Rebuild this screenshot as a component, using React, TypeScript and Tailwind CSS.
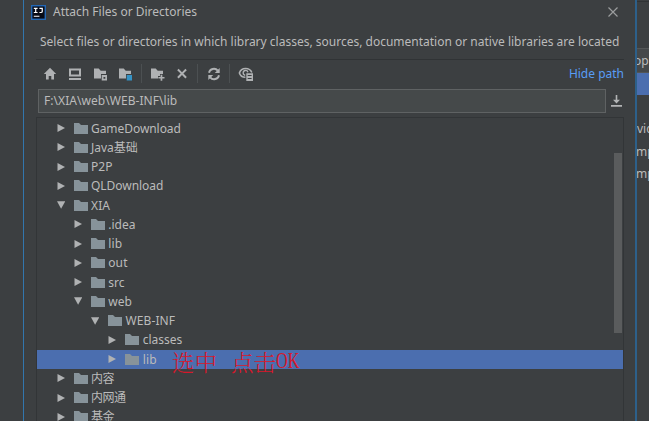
import type { ReactNode } from "react";

type Node = { name: string; depth: number; open?: boolean; selected?: boolean; spacing?: string };

const nodes: Node[] = [
  { name: "GameDownload", depth: 0, spacing: "tracking-[-0.06px]" },
  { name: "Java基础", depth: 0, spacing: "tracking-normal" },
  { name: "P2P", depth: 0 },
  { name: "QLDownload", depth: 0, spacing: "tracking-[-0.04px]" },
  { name: "XIA", depth: 0, open: true },
  { name: ".idea", depth: 1, spacing: "tracking-normal" },
  { name: "lib", depth: 1 },
  { name: "out", depth: 1 },
  { name: "src", depth: 1, spacing: "tracking-normal" },
  { name: "web", depth: 1, open: true, spacing: "tracking-normal" },
  { name: "WEB-INF", depth: 2, open: true, spacing: "tracking-[0.1px]" },
  { name: "classes", depth: 3, spacing: "tracking-normal" },
  { name: "lib", depth: 3, selected: true },
  { name: "内容", depth: 0, spacing: "tracking-[-0.5px]" },
  { name: "内网通", depth: 0, spacing: "tracking-[-0.5px]" },
  { name: "基金", depth: 0, spacing: "tracking-[-0.5px]" },
];

const indents = ["pl-[19.5px]", "pl-[36.75px]", "pl-[54px]", "pl-[71.25px]"];

function TreeRow({ node }: { node: Node }) {
  return (
    <div
      className={`flex h-[19.25px] shrink-0 items-center ${indents[node.depth]} ${node.selected ? "bg-[#4b6eaf]" : ""}`}
    >
      <svg className="mr-[9px] h-2 w-2 shrink-0" viewBox="0 0 8 8" fill="#b0b2b3">
        <path d={node.open ? "M0 .3h8.3L4.1 7.7z" : "M.5 0v8L8 4z"} />
      </svg>
      <svg className="mr-[3.5px] h-[11px] w-[14px] shrink-0" viewBox="0 0 14 11" fill="#87939a">
        <path d="M0 0h5l2 2h7v9H0z" />
      </svg>
      <span className={`whitespace-nowrap leading-[19px] ${node.spacing ?? "tracking-[0.1px]"}`}>{node.name}</span>
    </div>
  );
}

function Icon({ children, className = "" }: { children: ReactNode; className?: string }) {
  return (
    <svg className={`h-4 w-4 shrink-0 ${className}`} viewBox="0 0 16 16" fill="#afb1b3">
      {children}
    </svg>
  );
}

function Toolbar() {
  return (
    <div className="flex h-[29px] items-center pb-[2px] pl-[6px]">
      <Icon>
        <path d="M8 1.8 14.2 8H12v5.5H9.3V10H6.7v3.5H4V8H1.8z" />
      </Icon>
      <Icon className="ml-[9px]">
        <path fillRule="evenodd" d="M2 2.5h12v8H2zM4 4.5v4h8v-4zM2 12h12v2H2z" />
      </Icon>
      <Icon className="ml-[9px]">
        <path d="M2 2.5h4.7l2 2.2H14V8H9v4.5H2z" />
        <path fillRule="evenodd" d="M9.7 9h5.3v5.5H9.7zM11.5 11v1.8h1.8V11z" />
      </Icon>
      <Icon className="ml-[9px]">
        <path d="M2 2.5h4.7l2 2.2H14V8H9v4.5H2z" />
        <path fill="#3592c4" d="M9.7 9h5.3v5.5H9.7z" />
      </Icon>
      <div className="ml-[8px] h-[19px] w-px bg-[#4c5052]" />
      <Icon className="ml-[7px]">
        <path d="M2 2.5h4.7l2 2.2H14V8h-3v2H9v2.5H2z" />
        <path d="M11.6 8.7h1.7v2.2h2.2v1.7h-2.2v2.2h-1.7v-2.2H9.4v-1.7h2.2z" />
      </Icon>
      <Icon className="ml-[9px]">
        <path d="m3.2 4.2 1.4-1.4L8 6.2l3.4-3.4 1.4 1.4L9.4 7.6l3.4 3.5-1.4 1.4L8 9.1l-3.4 3.4-1.4-1.4 3.4-3.5z" />
      </Icon>
      <div className="ml-[7px] h-[19px] w-px bg-[#4c5052]" />
      <Icon className="ml-[8px]">
        <path
          d="M3 6.8a5 5 0 0 1 8.8-2.1M13 9.2a5 5 0 0 1-8.8 2.1"
          fill="none"
          stroke="#afb1b3"
          strokeWidth="1.9"
        />
        <path d="M13.7 2v5H8.8zM2.3 14V9h4.9z" />
      </Icon>
      <div className="ml-[7px] h-[19px] w-px bg-[#4c5052]" />
      <Icon className="ml-[8px]">
        <path
          d="M7.4 11.3C4.4 11.3 2.1 9.2 1.4 7 2.2 4.5 4.7 2.5 7.6 2.5s5.3 1.7 6.2 4"
          fill="none"
          stroke="#afb1b3"
          strokeWidth="1.6"
        />
        <path d="M7.2 9.2A2.4 2.4 0 1 1 9.9 6.2" fill="none" stroke="#afb1b3" strokeWidth="1.4" />
        <path fillRule="evenodd" d="M8.3 7.2H15V15H8.3zM9.7 9.1v1h3.9v-1zM9.7 12v1h3.9v-1z" />
      </Icon>
      <span className="ml-auto whitespace-nowrap text-[12px] text-[#589df6]">Hide path</span>
    </div>
  );
}

function Dialog() {
  return (
    <section className="flex h-full w-[614px] shrink-0 flex-col border-l border-r-2 border-l-[#3276ad] border-r-[#2d608a] pl-[12px] pr-[11px]">
      <header className="flex h-6 shrink-0 items-center">
        <svg className="-ml-[5px] h-[15px] w-[15px]" viewBox="0 0 16 16">
          <path fill="#2468b5" d="M0 0h16v16H0z" />
          <path fill="#080b16" d="M1.5 1.5h13v13h-13z" />
          <path d="M3 3.5h4M5 3.5V8M3 8h4M9 3.5h3V7q0 1-1.5 1H9M3 12h6" fill="none" stroke="#fff" strokeWidth="1.3" />
        </svg>
        <span className="ml-[7px] whitespace-nowrap text-[12px]">Attach Files or Directories</span>
        <svg
          className="ml-auto mr-[6px] h-[10px] w-[10px]"
          viewBox="0 0 10 10"
          fill="none"
          stroke="#9b9d9e"
          strokeWidth="1.2"
        >
          <path d="m.5.5 9 9m0-9-9 9" />
        </svg>
      </header>
      <div className="flex h-[36px] shrink-0 items-center border-b border-[#303335] pl-[4px]">
        <p className="whitespace-nowrap text-[12px]">
          Select files or directories in which library classes, sources, documentation or native libraries are located
        </p>
      </div>
      <Toolbar />
      <div className="flex h-6 shrink-0 items-center pl-[2px]">
        <div className="flex h-6 w-[568px] items-center border border-[#5f6263] bg-[#45494a] pl-[5px] text-[12px]">
          <span className="tracking-[0.05px]">F:\XIA\web\WEB-INF\lib</span>
        </div>
        <svg className="ml-[5px] h-3 w-[11px]" viewBox="0 0 11 12" fill="#b2b4b5">
          <path d="M4.7 0h1.6v4.8H9L5.5 8.5 2 4.8h2.7zM0 10h11v1.7H0z" />
        </svg>
      </div>
      <div className="relative mt-[4px] min-h-0 flex-1 overflow-hidden border-l border-r border-t border-[#323537] pt-[0.5px]">
        <div className="flex flex-col text-[12px]">
          {nodes.map((node, i) => (
            <TreeRow key={i} node={node} />
          ))}
        </div>
        <div className="absolute right-[1px] top-[35px] h-[180px] w-[8px] bg-[#5a5c5d]" />
        <div className="absolute left-[135px] top-[231px] flex whitespace-nowrap font-['Noto_Serif_CJK_SC','Noto_Sans_CJK_SC',serif] text-[22.5px] font-light leading-6 text-[#d5182b]">
          <span>选中</span>
          <span className="ml-[14px]">点击</span>
          <span className="origin-left scale-x-[0.72] font-['Liberation_Serif',serif] font-normal">OK</span>
        </div>
      </div>
    </section>
  );
}

function Background() {
  return (
    <aside className="flex min-w-0 flex-1 flex-col overflow-hidden whitespace-nowrap text-[12px]">
      <div className="h-[2px] shrink-0 border-b border-[#303335]" />
      <div className="h-[46px] shrink-0" />
      <div className="flex h-[25px] shrink-0 items-center border-y border-[#535657] bg-[#45484a]">
        <span className="-ml-[3px] pt-px">opp</span>
      </div>
      <div className="h-[22px] shrink-0 bg-[#4b6eaf]" />
      <div className="mt-[23px] flex flex-col leading-[22.5px]">
        <span>vic</span>
        <span className="-ml-px">mp</span>
        <span className="-ml-px">mp</span>
      </div>
    </aside>
  );
}

export default function App() {
  return (
    <main className="flex h-[421px] w-[649px] overflow-hidden bg-[#3c3f41] font-['Noto_Sans','Noto_Sans_CJK_SC',sans-serif] text-[#bbbbbb]">
      <div className="w-[23px] shrink-0" />
      <Dialog />
      <Background />
    </main>
  );
}
